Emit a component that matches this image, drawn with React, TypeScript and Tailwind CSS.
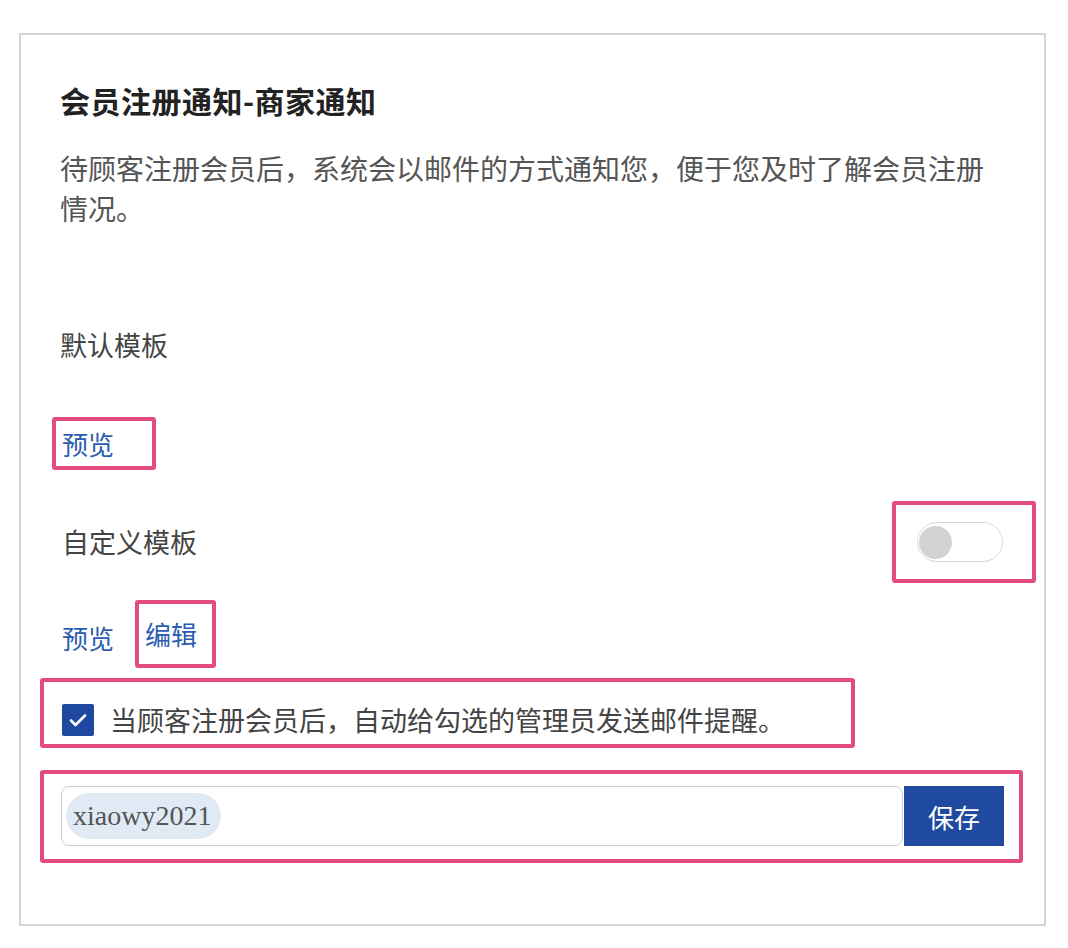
import { useState } from 'react';

const pink = 'border-4 border-[#e54c7e] rounded-[3px]';

function Toggle({ on, onChange }: { on: boolean; onChange: (v: boolean) => void }) {
    return (
        <button
            type="button"
            onClick={() => onChange(!on)}
            className={`flex items-center w-[86px] h-[40px] rounded-full border-[1.5px] border-[#d9d9d9] bg-white px-[1px] ${on ? 'justify-end' : 'justify-start'}`}
        >
            <span className="block w-[33px] h-[33px] rounded-full bg-[#d2d2d2]" />
        </button>
    );
}

export default function App() {
    const [custom, setCustom] = useState(false);
    const [notify, setNotify] = useState(true);

    return (
        <div className="min-h-screen bg-white pt-[33px] pl-[19px] font-['Noto_Sans_CJK_SC',sans-serif]">
            <div className="box-border w-[1027px] h-[893px] border-2 border-[#d4d4d4] pt-[45px] px-[39px]">
                <h2 className="text-[30px] leading-[40px] font-bold text-[#222] tracking-[0.5px]">会员注册通知-商家通知</h2>
                <p className="mt-[28px] text-[28px] leading-[40px] text-[#555]">
                    待顾客注册会员后，系统会以邮件的方式通知您，便于您及时了解会员注册情况。
                </p>

                <div className="mt-[97px] text-[27px] leading-[40px] text-[#444]">默认模板</div>

                <div className={`${pink} mt-[52px] -ml-[8px] w-[104px] h-[53px] pl-[6px] flex items-center`}>
                    <a href="#" className="text-[26px] leading-none text-[#2a5db0]">预览</a>
                </div>

                <div className="mt-[31px] h-[82px] flex items-center justify-between">
                    <span className="text-[27px] leading-[40px] text-[#444] ml-[2px]">自定义模板</span>
                    <div className={`${pink} -mr-[31px] w-[144px] h-[82px] pl-[21px] flex items-center`}>
                        <Toggle on={custom} onChange={setCustom} />
                    </div>
                </div>

                <div className="mt-[17px] h-[68px] flex items-center">
                    <a href="#" className="ml-[2px] mt-[8px] text-[26px] leading-none text-[#2a5db0]">预览</a>
                    <div className={`${pink} ml-[21px] w-[81px] h-[68px] pl-[6px] flex items-center`}>
                        <a href="#" className="text-[26px] leading-none text-[#2a5db0]">编辑</a>
                    </div>
                </div>

                <div className={`${pink} mt-[10px] -ml-[20px] w-[815px] h-[70px] pl-[18px] pt-[14px] flex items-center`}>
                    <button
                        type="button"
                        onClick={() => setNotify(!notify)}
                        className={`w-[32px] h-[32px] rounded-[2px] flex items-center justify-center ${notify ? 'bg-[#1f48a0]' : 'bg-white border-2 border-[#999]'}`}
                    >
                        {notify && (
                            <svg width="24" height="24" viewBox="0 0 24 24" fill="none">
                                <path d="M5 12.5l4.5 4.5L19 7.5" stroke="#fff" strokeWidth="2.6" strokeLinecap="round" strokeLinejoin="round" />
                            </svg>
                        )}
                    </button>
                    <span className="ml-[16px] text-[27px] leading-[40px] text-[#444]">
                        当顾客注册会员后，自动给勾选的管理员发送邮件提醒。
                    </span>
                </div>

                <div className={`${pink} mt-[22px] -ml-[20px] w-[983px] h-[93px] pl-[17px] pt-[12px] flex items-start gap-[1px]`}>
                    <div className="w-[842px] h-[60px] rounded-[8px] border-[1.5px] border-[#cfcfcf] flex items-center pl-[4px]">
                        <span className="h-[46px] rounded-full bg-[#dfeaf5] pl-[7px] pr-[10px] flex items-center font-['Liberation_Serif',serif] text-[28px] text-[#555]">
                            xiaowy2021
                        </span>
                    </div>
                    <button type="button" className="w-[100px] h-[60px] bg-[#1f4aa0] text-white text-[26px]">
                        保存
                    </button>
                </div>
            </div>
        </div>
    );
}
